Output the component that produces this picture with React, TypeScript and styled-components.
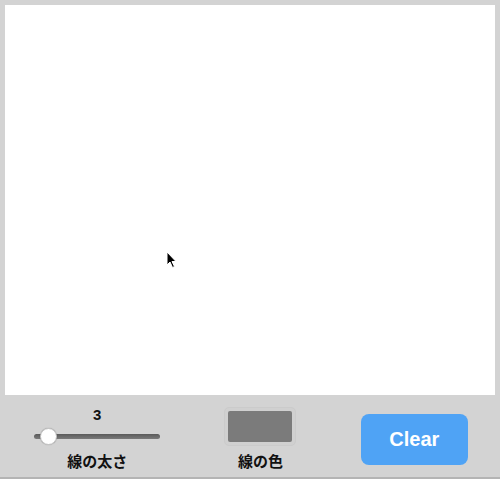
import React, { useState } from 'react';
import styled, { createGlobalStyle } from 'styled-components';

const GlobalStyle = createGlobalStyle`
  html, body {
    margin: 0;
    padding: 0;
    background: #d3d3d3;
    font-family: "Liberation Sans", "Noto Sans CJK JP", sans-serif;
  }
`;

const Page = styled.div`
  width: 500px;
  height: 479px;
  box-sizing: border-box;
  padding-top: 5px;
  border-bottom: 2px solid #b4b4b4;
  display: flex;
  flex-direction: column;
`;

const CanvasArea = styled.div`
  position: relative;
  width: 490px;
  height: 390px;
  margin: 0 5px;
  background: #fff;
  cursor: crosshair;
`;

const Pointer = styled.svg`
  position: absolute;
  left: 161px;
  top: 246px;
`;

const Controls = styled.div`
  flex: 1;
  display: flex;
  align-items: center;
  justify-content: space-around;
  padding: 4px 0 0 2px;
`;

const Group = styled.div`
  display: flex;
  flex-direction: column;
  align-items: center;
`;

const Value = styled.span`
  font-size: 15px;
  font-weight: bold;
  color: #111;
  line-height: 16px;
  margin-bottom: 6px;
`;

const Label = styled.span<{ $top: number }>`
  font-family: "Noto Sans CJK JP", sans-serif;
  font-size: 15px;
  font-weight: bold;
  color: #111;
  line-height: 18px;
  margin-top: ${p => p.$top}px;
`;

const Range = styled.input`
  -webkit-appearance: none;
  appearance: none;
  width: 126px;
  height: 16px;
  margin: 0;
  background: transparent;

  &::-webkit-slider-runnable-track {
    height: 5px;
    border-radius: 3px;
    background: linear-gradient(#5a5a5a, #7a7a7a);
  }

  &::-webkit-slider-thumb {
    -webkit-appearance: none;
    width: 17px;
    height: 17px;
    margin-top: -6px;
    border-radius: 50%;
    background: #fff;
    border: 1px solid #c4c4c4;
    box-sizing: border-box;
    box-shadow: 0 0 1px rgba(0, 0, 0, 0.3);
  }
`;

const Swatch = styled.input`
  -webkit-appearance: none;
  appearance: none;
  width: 72px;
  height: 39px;
  padding: 3px;
  margin: 0;
  box-sizing: border-box;
  border: 1px solid #cbcbcb;
  border-radius: 5px;
  background: #d0d0d0;

  &::-webkit-color-swatch-wrapper {
    padding: 0;
  }

  &::-webkit-color-swatch {
    border: none;
    border-radius: 2px;
  }
`;

const ClearButton = styled.button`
  width: 107px;
  height: 51px;
  border: none;
  border-radius: 8px;
  background: #4fa3f5;
  color: #fff;
  font-family: "Liberation Sans", sans-serif;
  font-size: 20px;
  font-weight: bold;
  cursor: pointer;
  margin-top: 3px;
`;

const App = () => {
  const [width, setWidth] = useState(3);
  const [color, setColor] = useState('#7b7b7b');

  return (
    <>
      <GlobalStyle />
      <Page>
        <CanvasArea>
          <Pointer width="12" height="18" viewBox="0 0 12 18">
            <path d="M1 1 L1 14 L4 11 L6.5 16.5 L8.5 15.5 L6 10.5 L10 10.5 Z" fill="#000" stroke="#fff" strokeWidth="1" />
          </Pointer>
        </CanvasArea>
        <Controls>
          <Group>
            <Value>{width}</Value>
            <Range
              type="range"
              min={1}
              max={40}
              value={width}
              onChange={e => setWidth(Number(e.target.value))}
            />
            <Label $top={7}>線の太さ</Label>
          </Group>
          <Group>
            <Swatch type="color" value={color} onChange={e => setColor(e.target.value)} />
            <Label $top={6}>線の色</Label>
          </Group>
          <ClearButton>Clear</ClearButton>
        </Controls>
      </Page>
    </>
  );
};

export default App;
